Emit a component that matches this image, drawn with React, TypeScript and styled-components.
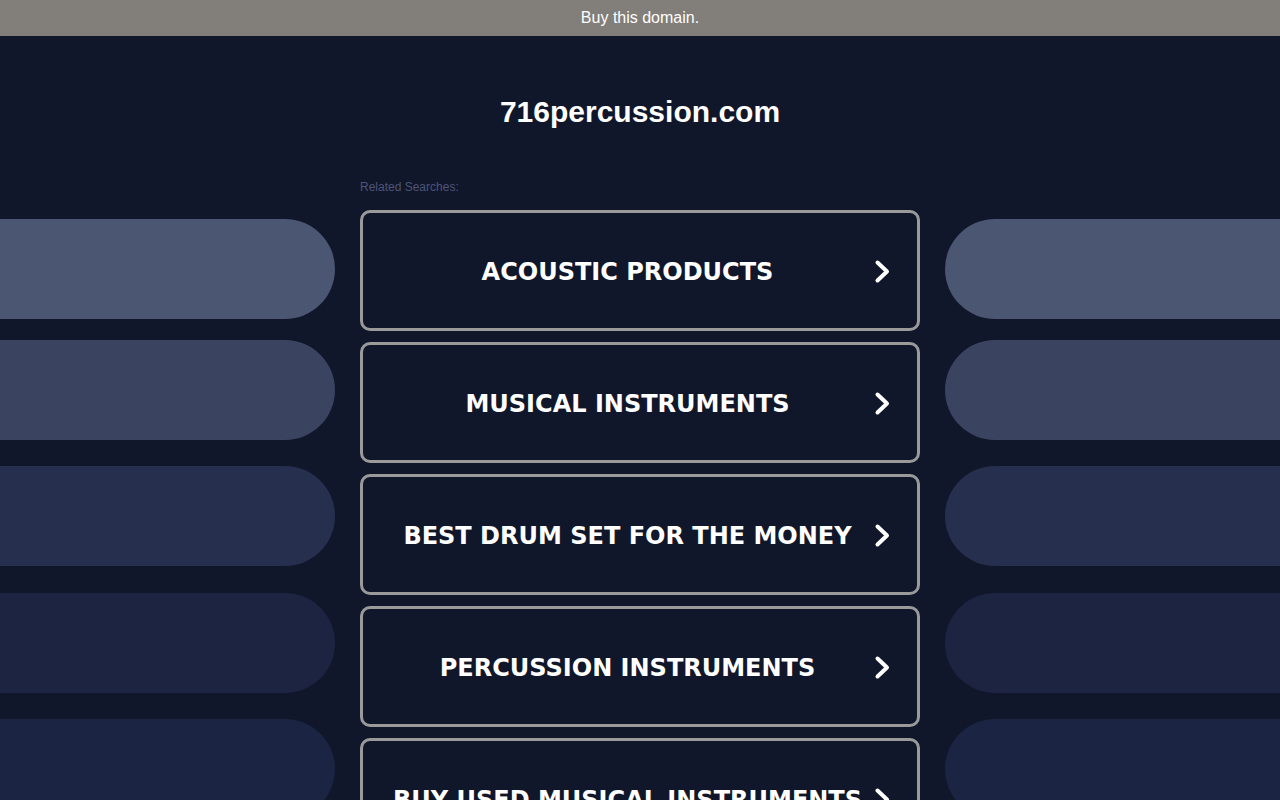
import React from "react";
import styled, { createGlobalStyle } from "styled-components";

const GlobalStyle = createGlobalStyle`
  html, body {
    margin: 0;
    padding: 0;
    background-color: #11172b;
    overflow: hidden;
  }
`;

const Page = styled.div`
  width: 1280px;
  height: 800px;
  overflow: hidden;
  background-color: #11172b;
  font-family: "Liberation Sans", Arial, sans-serif;
`;

const TopBar = styled.div`
  height: 36px;
  display: flex;
  align-items: center;
  justify-content: center;
  background-color: #827e79;
  color: #ffffff;
  font-size: 16px;
`;

const Body = styled.div`
  display: grid;
  grid-template-columns: 335px 560px 335px;
  column-gap: 25px;
`;

const PillStack = styled.div`
  display: flex;
  flex-direction: column;
  padding-top: 183px;
`;

const Pill = styled.div<{ $tone: string; $side: "left" | "right"; $space: number }>`
  height: 100px;
  flex-shrink: 0;
  margin-top: ${(props) => props.$space}px;
  background-color: ${(props) => props.$tone};
  border-radius: ${(props) =>
    props.$side === "left" ? "0 50px 50px 0" : "50px 0 0 50px"};
`;

const Center = styled.div`
  display: flex;
  flex-direction: column;
`;

const Domain = styled.h1`
  margin: 58px 0 0 0;
  font-size: 30px;
  line-height: 35px;
  font-weight: bold;
  color: #ffffff;
  text-align: center;
`;

const Related = styled.p`
  margin: 51px 0 0 0;
  font-size: 12px;
  line-height: 14px;
  color: #4b5577;
`;

const LinkList = styled.div`
  display: flex;
  flex-direction: column;
  gap: 11px;
  margin-top: 16px;
`;

const LinkButton = styled.a`
  box-sizing: border-box;
  height: 121px;
  display: flex;
  align-items: center;
  border: 3px solid #9a9a9a;
  border-radius: 10px;
  background-color: #11172b;
  color: #ffffff;
  text-decoration: none;
  flex-shrink: 0;
`;

const LinkText = styled.span`
  flex: 1;
  padding: 3px 0 0 18px;
  text-align: center;
  font-family: "DejaVu Sans", Verdana, Tahoma, sans-serif;
  font-weight: bold;
  font-size: 24px;
  white-space: nowrap;
`;

const Chevron = styled.svg`
  width: 17px;
  height: 25px;
  margin: 2px 26px 0 0;
  flex-shrink: 0;
`;

const searches = [
  "ACOUSTIC PRODUCTS",
  "MUSICAL INSTRUMENTS",
  "BEST DRUM SET FOR THE MONEY",
  "PERCUSSION INSTRUMENTS",
  "BUY USED MUSICAL INSTRUMENTS",
];

const pills = [
  { tone: "#4b5673", space: 0 },
  { tone: "#3a4360", space: 21 },
  { tone: "#262f4e", space: 26 },
  { tone: "#1d2442", space: 27 },
  { tone: "#1c2443", space: 26 },
];

const Side: React.FC<{ side: "left" | "right" }> = ({ side }) => (
  <PillStack>
    {pills.map((pill, index) => (
      <Pill key={index} $tone={pill.tone} $side={side} $space={pill.space} />
    ))}
  </PillStack>
);

export default function App() {
  return (
    <Page>
      <GlobalStyle />
      <TopBar>Buy this domain.</TopBar>
      <Body>
        <Side side="left" />
        <Center>
          <Domain>716percussion.com</Domain>
          <Related>Related Searches:</Related>
          <LinkList>
            {searches.map((term) => (
              <LinkButton key={term} href="#">
                <LinkText>{term}</LinkText>
                <Chevron viewBox="0 0 17 25">
                  <polyline
                    points="3.5,3.5 13,12.5 3.5,21.5"
                    fill="none"
                    stroke="#ffffff"
                    strokeWidth="4"
                    strokeLinecap="round"
                    strokeLinejoin="round"
                  />
                </Chevron>
              </LinkButton>
            ))}
          </LinkList>
        </Center>
        <Side side="right" />
      </Body>
    </Page>
  );
}
